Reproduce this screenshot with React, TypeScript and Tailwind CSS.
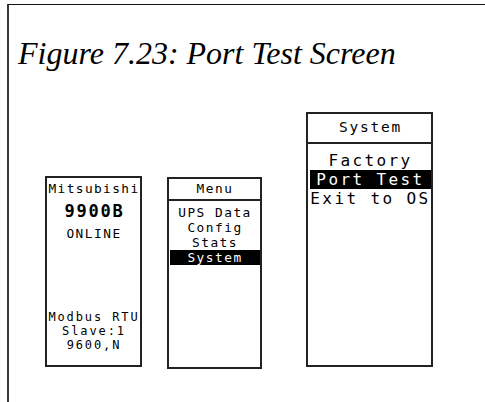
import React from 'react';

const mono = { fontFamily: '"DejaVu Sans Mono", "Liberation Mono", monospace' };

const MenuRow = ({ label, active, className }: { label: string; active?: boolean; className: string }) => (
  <div className={`text-center whitespace-pre ${className} ${active ? 'bg-black text-white' : 'text-black'}`}>
    {label}
  </div>
);

export default function App() {
  return (
    <div className="w-[485px] h-[402px] bg-white overflow-hidden">
      <div className="ml-[7px] mt-[4px] h-[420px] border-t border-l-2 border-t-[#111] border-l-[#3a3a3a]">
        {/* Caption */}
        <h1 className="pl-[9px] pt-[32px] text-[32px] leading-[32px] italic text-black font-['Liberation_Serif',serif]">
          Figure 7.23: Port Test Screen
        </h1>

        {/* Three LCD screens */}
        <div className="flex items-start ml-[36px] mt-[43px]" style={mono}>
          {/* Status screen */}
          <div className="mt-[64px] w-[97px] h-[191px] border-2 border-[#222] flex flex-col items-center text-black">
            <div className="pt-[3px] pl-[1px] text-[12.8px] leading-[15px] tracking-[1.4px]">Mitsubishi</div>
            <div className="mt-[5px] pl-[2px] text-[17px] leading-[20px] tracking-[1.8px] font-bold">9900B</div>
            <div className="mt-[5px] pl-[1px] text-[12.8px] leading-[15px] tracking-[1.5px]">ONLINE</div>
            <div className="mt-auto pb-[13px] pl-[1px] flex flex-col items-center text-[12px] leading-[14px] tracking-[1.9px]">
              <span className="whitespace-pre">Modbus RTU</span>
              <span>Slave:1</span>
              <span>9600,N</span>
            </div>
          </div>

          {/* Main menu */}
          <div className="ml-[25px] mt-[65px] w-[95px] h-[192px] border-2 border-[#222] flex flex-col">
            <div className="h-[22px] pl-[1px] flex items-center justify-center border-b-2 border-[#222] text-[12.8px] tracking-[1.5px] text-black">
              Menu
            </div>
            <div className="pt-[4px] pl-[1px] text-[12.8px] tracking-[1.5px]">
              <MenuRow label="UPS Data" className="leading-[15px]" />
              <MenuRow label="Config" className="leading-[15px]" />
              <MenuRow label="Stats" className="leading-[15px]" />
              <MenuRow label="System" active className="leading-[15px]" />
            </div>
          </div>

          {/* System submenu */}
          <div className="ml-[44px] w-[127px] h-[255px] border-2 border-[#222] flex flex-col">
            <div className="h-[30px] pl-[2px] flex items-center justify-center border-b-2 border-[#222] text-[14.5px] tracking-[1.8px] text-black">
              System
            </div>
            <div className="pt-[7px] pl-[2px] text-[16px] tracking-[2.4px]">
              <MenuRow label="Factory" className="leading-[19px]" />
              <MenuRow label="Port Test" active className="leading-[19px]" />
              <MenuRow label="Exit to OS" className="leading-[19px]" />
            </div>
          </div>
        </div>
      </div>
    </div>
  );
}
